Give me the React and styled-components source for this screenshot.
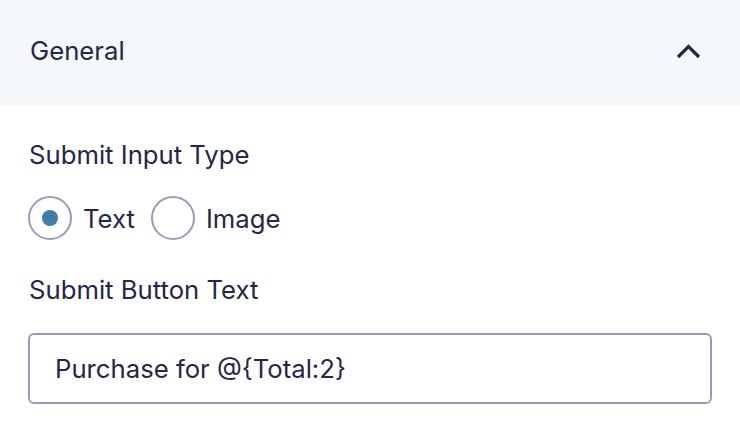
import React, { useState } from "react";
import styled, { createGlobalStyle } from "styled-components";

const GlobalStyle = createGlobalStyle`
  html, body {
    margin: 0;
    padding: 0;
    background: #ffffff;
  }
  body {
    font-family: Inter, "Noto Sans", sans-serif;
    color: #242748;
  }
`;

export default function App() {
  const [type, setType] = useState("text");
  const [open, setOpen] = useState(true);

  return (
    <>
      <GlobalStyle />
      <Panel>
        <Header onClick={() => setOpen(!open)}>
          <Title>General</Title>
          <Chevron viewBox="0 0 24 24" $open={open}>
            <path d="M1.5 17 L12 6.5 L22.5 17" />
          </Chevron>
        </Header>
        {open && (
          <Body>
            <Label>Submit Input Type</Label>
            <RadioRow>
              <RadioOption onClick={() => setType("text")}>
                <RadioCircle $checked={type === "text"} />
                <span>Text</span>
              </RadioOption>
              <RadioOption onClick={() => setType("image")}>
                <RadioCircle $checked={type === "image"} />
                <span>Image</span>
              </RadioOption>
            </RadioRow>
            <Label>Submit Button Text</Label>
            <TextInput defaultValue="Purchase for @{Total:2}" />
          </Body>
        )}
      </Panel>
    </>
  );
}

// styling
const Panel = styled.div`
  width: 740px;
  height: 445px;
  background: #ffffff;
`;

const Header = styled.div`
  height: 105px;
  background: #f5f8fb;
  display: flex;
  align-items: center;
  justify-content: space-between;
  padding: 0 39px 0 30px;
  box-sizing: border-box;
  cursor: pointer;
`;

const Title = styled.h2`
  margin: 0;
  margin-top: -4px;
  font-size: 25.7px;
  font-weight: 400;
  color: #242748;
`;

const Chevron = styled.svg`
  width: 25px;
  height: 24px;
  margin-top: -2px;
  fill: none;
  stroke: #242748;
  stroke-width: 3.2;
  transform: ${(p) => (p.$open ? "none" : "rotate(180deg)")};
`;

const Body = styled.div`
  padding: 35px 29px 0 28px;
  display: flex;
  flex-direction: column;
`;

const Label = styled.div`
  font-size: 25.7px;
  line-height: 30px;
  color: #242748;
  padding-left: 1px;
`;

const RadioRow = styled.div`
  display: flex;
  align-items: center;
  gap: 16px;
  margin: 26px 0 35px;
`;

const RadioOption = styled.label`
  display: flex;
  align-items: center;
  gap: 11px;
  font-size: 25.7px;
  cursor: pointer;
`;

const RadioCircle = styled.span`
  width: 44px;
  height: 44px;
  box-sizing: border-box;
  border: 2px solid #9a9abb;
  border-radius: 50%;
  display: flex;
  align-items: center;
  justify-content: center;

  &::after {
    content: "";
    width: 16px;
    height: 16px;
    border-radius: 50%;
    background: #3e7ea8;
    display: ${(p) => (p.$checked ? "block" : "none")};
  }
`;

const TextInput = styled.input`
  margin-top: 28px;
  height: 71px;
  width: 684px;
  box-sizing: border-box;
  border: 2px solid #9a9ab8;
  border-radius: 6px;
  padding: 0 25px;
  font-family: Inter, "Noto Sans", sans-serif;
  font-size: 25.7px;
  color: #242748;
  outline: none;
`;
